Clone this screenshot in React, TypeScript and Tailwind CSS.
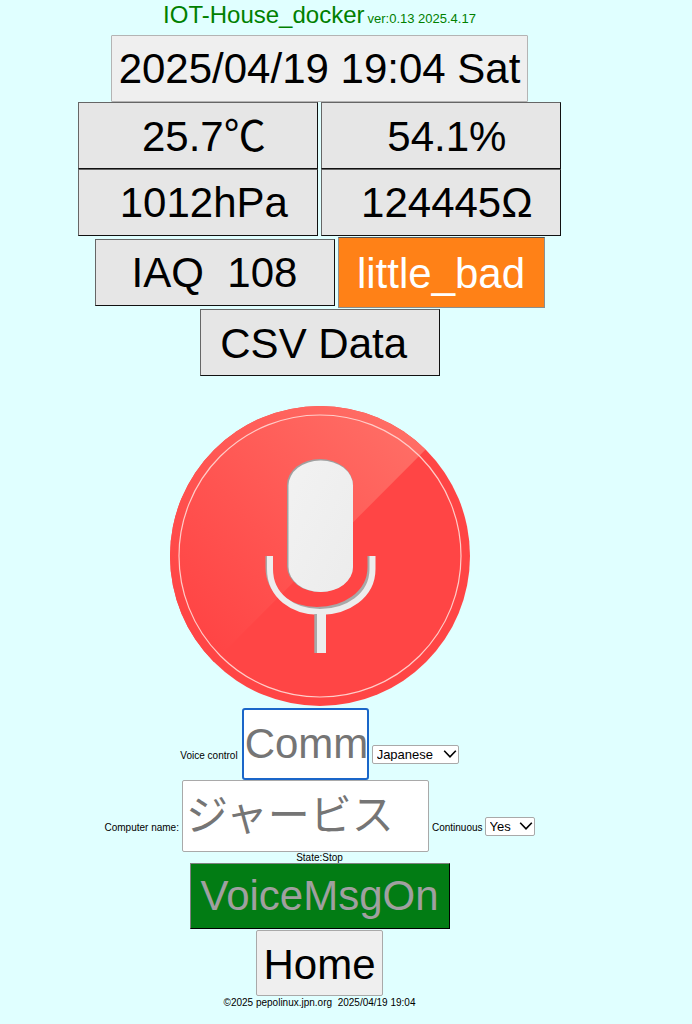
import React from "react";

const dark = "border border-t-[#666666] border-l-[#666666] border-r-[#111111] border-b-[#111111]";
const cell = `h-[67px] w-[240px] bg-[#e6e6e6] text-black text-[42px] leading-none whitespace-pre ${dark}`;

function Chevron() {
  return (
    <svg className="absolute right-[2px] top-[4px] pointer-events-none" width="14" height="10" viewBox="0 0 14 10" fill="none">
      <path d="M1.2 1.8 L7 7.8 L12.8 1.8" stroke="#000" strokeWidth="1.6" />
    </svg>
  );
}

function Sel({ w, children }: { w: string; children: React.ReactNode }) {
  return (
    <div className={`relative h-[19px] ${w}`}>
      <select className="appearance-none block w-full h-full bg-white border border-[#a9a9a9] rounded-[2px] pl-[4px] text-[13px] leading-none text-black">
        {children}
      </select>
      <Chevron />
    </div>
  );
}

const uWhite = "M100 150 V163 C100 190 123 206 150 206 C177 206 202.5 190 202.5 163 V150";
const uGray = "M97.5 150 V161 C97.5 188 121 203 147 203 C173 203 199.5 188 199.5 161 V150";

function Mic() {
  return (
    <svg width="300" height="300" viewBox="0 0 300 300" className="block">
      <defs>
        <linearGradient id="gl" gradientUnits="userSpaceOnUse" x1="53" y1="247" x2="253" y2="46">
          <stop offset="0" stopColor="#ff4545" />
          <stop offset="0.4" stopColor="#ff5451" />
          <stop offset="1" stopColor="#ff6d65" />
        </linearGradient>
        <clipPath id="disc"><circle cx="150" cy="150" r="150" /></clipPath>
        <linearGradient id="cap" x1="0" y1="0" x2="1" y2="1">
          <stop offset="0" stopColor="#f2f2f2" />
          <stop offset="1" stopColor="#ececec" />
        </linearGradient>
      </defs>
      <circle cx="150" cy="150" r="150" fill="#ff4545" />
      <path d="M-10 310 L290 9 L230 -20 L-20 -20 Z" fill="url(#gl)" clipPath="url(#disc)" />
      <circle cx="150" cy="150" r="141" fill="none" stroke="#ffcdc9" strokeWidth="1.2" />
      <rect x="117" y="53" width="66" height="133" rx="33" ry="26" fill="#a0a0a0" />
      <rect x="118.5" y="54.5" width="64.5" height="131.5" rx="32" ry="25" fill="url(#cap)" />
      <path d={uGray} fill="none" stroke="#a8a8a8" strokeWidth="4" />
      <path d={uWhite} fill="none" stroke="#ededed" strokeWidth="6" />
      <rect x="144.3" y="208" width="4" height="39" fill="#a8a8a8" />
      <rect x="147" y="206" width="9" height="41" fill="#ededed" />
    </svg>
  );
}

export default function App() {
  return (
    <div className="min-h-[1024px] bg-[#e0ffff] font-['Liberation_Sans','Noto_Sans_CJK_JP',sans-serif]">
      <div className="w-[639px] flex flex-col items-center">
        <div className="h-[35px] pt-[3px] flex items-baseline gap-[3px] text-[#008000]">
          <span className="text-[24px] leading-[24px]">IOT-House_docker</span>
          <span className="text-[13px] leading-[13px]">ver:0.13 2025.4.17</span>
        </div>
        <button className="h-[67px] w-[417px] bg-[#efefef] border border-[#b4b4b4] rounded-[1px] text-black text-[42px] leading-none whitespace-pre">2025/04/19 19:04 Sat</button>
        <div className="flex gap-[3px]">
          <button className={`pt-[2px] ${cell}`}>{"\u00a025.7℃"}</button>
          <button className={`pt-[2px] ${cell}`}>{"\u00a054.1%"}</button>
        </div>
        <div className="flex gap-[3px]">
          <button className={cell}>{"\u00a01012hPa"}</button>
          <button className={cell}>{"\u00a0124445Ω"}</button>
        </div>
        <div className="mt-[1px] h-[71px] flex items-center gap-[3px]">
          <button className={cell}>{"IAQ\u00a0\u00a0108"}</button>
          <button className="h-[71px] w-[207px] bg-[#ff8117] pt-[2px] text-white text-[42px] leading-none border border-[#8a8f8f] border-t-[#555555]">little_bad</button>
        </div>
        <button className={`mt-[1px] pt-[2px] ${cell}`}>{"CSV Data\u00a0"}</button>
        <div className="mt-[30px]"><Mic /></div>
        <div className="mt-[2px] flex items-end">
          <label className="text-[10px] leading-none text-black mb-[19px] mr-[4px]">Voice control</label>
          <input placeholder="Command" className="h-[72px] w-[127px] bg-white border-2 border-[#1a66c9] rounded-[3px] pl-[1px] text-[42px] leading-none text-black outline-none placeholder:text-[#757575]" />
          <div className="mb-[16px] ml-[3px]">
            <Sel w="w-[87px]"><option>Japanese</option></Sel>
          </div>
        </div>
        <div className="flex items-end">
          <label className="text-[10px] leading-none text-black mb-[19px] mr-[3px]">Computer name:</label>
          <input placeholder="ジャービス" className="h-[72px] w-[247px] bg-white border border-[#a9a9a9] rounded-[2px] pl-[3px] text-[42px] leading-none text-black outline-none placeholder:text-[#757575]" />
          <label className="text-[10px] leading-none text-black mb-[19px] ml-[3px] mr-[2px]">Continuous</label>
          <div className="mb-[16px]">
            <Sel w="w-[50px]"><option>Yes</option></Sel>
          </div>
        </div>
        <div className="h-[11px] text-[10px] leading-[11px] text-black">State:Stop</div>
        <button className="h-[66px] w-[260px] bg-[#027c14] text-[#a0a0a0] text-[42px] leading-none border border-t-[#808080] border-l-[#808080] border-r-black border-b-black">VoiceMsgOn</button>
        <button className="mt-[1px] h-[66px] w-[127px] bg-[#efefef] pt-[3px] text-black text-[42px] leading-none border border-[#a9a9a9] rounded-[2px]">Home</button>
        <div className="text-[10px] leading-[11px] mt-[1px] text-black whitespace-pre">©2025 pepolinux.jpn.org  2025/04/19 19:04</div>
      </div>
    </div>
  );
}
